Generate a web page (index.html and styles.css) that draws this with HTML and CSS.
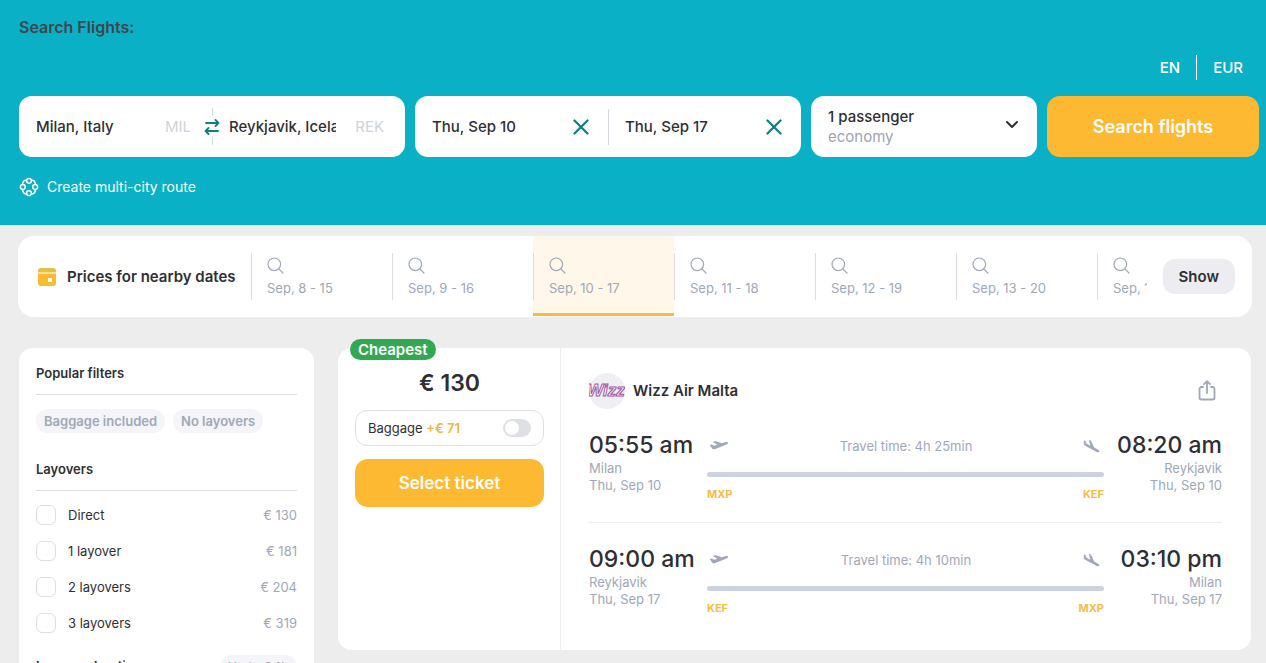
FILE: index.html
```html
<!DOCTYPE html>
<html lang="en">
<head>
    <meta charset="utf-8">
    <title>Search Flights</title>
    <meta name="viewport" content="width=device-width, initial-scale=1">
    <link rel="stylesheet" href="styles.css">
</head>
<body>
    <svg class="sprite" aria-hidden="true">
        <symbol id="close" viewBox="0 0 16 16"><path d="M1.500 1.500l13 13M14.500 1.500l-13 13" fill="none" stroke="currentColor" stroke-width="2.300" stroke-linecap="round"/></symbol>
        <symbol id="loupe" viewBox="0 0 17 17"><g fill="none" stroke="currentColor" stroke-width="1.200" stroke-linecap="round"><circle cx="7.300" cy="7.300" r="6.300"/><path d="M11.800 11.800l4.200 4.200"/></g></symbol>
        <symbol id="takeoff" viewBox="0 0 20 12"><path d="M.8 5l1.900-.6 2.500 1.300 3.100-.9L4 1.900l2.300-.8 6.500 2.200 4-1.200c1.200-.4 2.200-.2 2.400.5.2.7-.5 1.400-1.700 1.800L5.600 9.200c-1 .3-1.900.1-2.500-.7z" fill="currentColor"/></symbol>
        <symbol id="landing" viewBox="0 0 17 15"><path d="M.8 1.200l1.600.8.900 2.500 4 2.200L5.900.7l2.100 1 3.200 6.800 3.900 2.300c1 .6 1.400 1.400 1.100 2-.3.600-1.300.700-2.400.1L2.200 6.700C1.200 6.100.8 5.400.8 4.500z" fill="currentColor"/></symbol>
    </svg>

    <header class="header">
        <h1>Search Flights:</h1>
        <nav class="locale">
            <a href="#">EN</a>
            <a href="#">EUR</a>
        </nav>
        <form class="search">
            <div class="box">
                <div class="place">
                    <input type="text" value="Milan, Italy" aria-label="From">
                    <span class="code">MIL</span>
                </div>
                <button type="button" class="swap" aria-label="Swap cities">
                    <svg width="16" height="18" viewBox="0 0 16 18" fill="none" stroke="currentColor" stroke-width="1.800" stroke-linecap="round" stroke-linejoin="round"><path d="M2 5h12.500M11.500 2L14.500 5 11.500 8M14 13H1.500M4.500 10L1.500 13 4.500 16"/></svg>
                </button>
                <div class="place">
                    <input type="text" value="Reykjavik, Iceland" aria-label="To">
                    <span class="code">REK</span>
                </div>
            </div>
            <div class="box">
                <div class="date">
                    <input type="text" value="Thu, Sep 10" aria-label="Depart">
                    <button type="button" class="clear" aria-label="Clear departure date"><svg width="16" height="16"><use href="#close"/></svg></button>
                </div>
                <div class="date">
                    <input type="text" value="Thu, Sep 17" aria-label="Return">
                    <button type="button" class="clear" aria-label="Clear return date"><svg width="16" height="16"><use href="#close"/></svg></button>
                </div>
            </div>
            <button type="button" class="box passengers">
                <span>
                    <strong>1 passenger</strong>
                    <span class="cabin">economy</span>
                </span>
                <svg width="14" height="9" viewBox="0 0 14 9" fill="none" stroke="currentColor" stroke-width="2" stroke-linecap="round" stroke-linejoin="round"><path d="M2 2l5 5 5-5"/></svg>
            </button>
            <button type="submit" class="submit">Search flights</button>
        </form>
        <a href="#" class="multi">
            <svg width="20" height="20" viewBox="0 0 20 20" fill="none" stroke="currentColor" stroke-width="1.500" stroke-linecap="round">
                <circle cx="10" cy="3.800" r="2.400"/><circle cx="16.200" cy="10" r="2.400"/><circle cx="10" cy="16.200" r="2.400"/><circle cx="3.800" cy="10" r="2.400"/>
                <path d="M12.500 3c2 .1 3.700 1.500 4 4.400M16.500 12.600c-.3 2.900-2 4.300-4 4.400M7.500 17c-2-.1-3.700-1.500-4-4.400M3.500 7.400c.3-2.900 2-4.300 4-4.400"/>
            </svg>
            Create multi-city route
        </a>
    </header>

    <section class="nearby">
        <h2>
            <svg width="18" height="18" viewBox="0 0 18 18"><path d="M0 4.500V3a3 3 0 0 1 3-3h12a3 3 0 0 1 3 3v1.500z" fill="#e8bf3f"/><path d="M0 5.500h18V15a3 3 0 0 1-3 3H3a3 3 0 0 1-3-3z" fill="#fbbb30"/><rect x="10" y="10" width="4" height="4" rx=".5" fill="#fff"/></svg>
            Prices for nearby dates
        </h2>
        <div class="dates">
            <a href="#" class="day"><span><svg width="17" height="17"><use href="#loupe"/></svg>Sep, 8 - 15</span></a>
            <a href="#" class="day"><span><svg width="17" height="17"><use href="#loupe"/></svg>Sep, 9 - 16</span></a>
            <a href="#" class="day active"><span><svg width="17" height="17"><use href="#loupe"/></svg>Sep, 10 - 17</span></a>
            <a href="#" class="day"><span><svg width="17" height="17"><use href="#loupe"/></svg>Sep, 11 - 18</span></a>
            <a href="#" class="day"><span><svg width="17" height="17"><use href="#loupe"/></svg>Sep, 12 - 19</span></a>
            <a href="#" class="day"><span><svg width="17" height="17"><use href="#loupe"/></svg>Sep, 13 - 20</span></a>
            <a href="#" class="day"><span><svg width="17" height="17"><use href="#loupe"/></svg>Sep, 14 - 21</span></a>
        </div>
        <button type="button" class="show">Show</button>
    </section>

    <main class="content">
        <aside class="filters">
            <h3>Popular filters</h3>
            <div class="chips">
                <button type="button" class="chip">Baggage included</button>
                <button type="button" class="chip">No layovers</button>
            </div>
            <h3>Layovers</h3>
            <div class="options">
                <label><input type="checkbox">Direct <span>€ 130</span></label>
                <label><input type="checkbox">1 layover <span>€ 181</span></label>
                <label><input type="checkbox">2 layovers <span>€ 204</span></label>
                <label><input type="checkbox">3 layovers <span>€ 319</span></label>
            </div>
            <h3 class="duration">Layover duration <span class="chip">Up to 34h</span></h3>
        </aside>

        <article class="ticket">
            <div class="offer">
                <span class="badge">Cheapest</span>
                <div class="price">€ 130</div>
                <label class="baggage">
                    <span>Baggage <b>+€ 71</b></span>
                    <input type="checkbox" role="switch">
                </label>
                <button type="button" class="select">Select ticket</button>
            </div>
            <div class="flights">
                <div class="airline">
                    <svg class="logo" width="36" height="36" viewBox="0 0 36 36">
                        <circle cx="18" cy="18" r="18" fill="#efeff4"/>
                        <text x="17" y="23" text-anchor="middle">Wizz</text>
                    </svg>
                    <h3>Wizz Air Malta</h3>
                    <button type="button" class="share" aria-label="Share">
                        <svg width="18" height="22" viewBox="0 0 18 22" fill="none" stroke="currentColor" stroke-width="1.800" stroke-linecap="round" stroke-linejoin="round"><path d="M5 7H3.500A2 2 0 0 0 1.500 9v8.500a2 2 0 0 0 2 2h11a2 2 0 0 0 2-2V9a2 2 0 0 0-2-2H13M9 13V1.500M6 4.200L9 1.200l3 3"/></svg>
                    </button>
                </div>
                <div class="leg">
                    <div class="point">
                        <div class="time">05:55 am</div>
                        <div>Milan</div>
                        <div>Thu, Sep 10</div>
                    </div>
                    <div class="path">
                        <div class="travel">
                            <svg width="20" height="12"><use href="#takeoff"/></svg>
                            <span>Travel time: 4h 25min</span>
                            <svg width="17" height="15"><use href="#landing"/></svg>
                        </div>
                        <div class="line"></div>
                        <div class="airports"><span>MXP</span><span>KEF</span></div>
                    </div>
                    <div class="point arrival">
                        <div class="time">08:20 am</div>
                        <div>Reykjavik</div>
                        <div>Thu, Sep 10</div>
                    </div>
                </div>
                <div class="leg">
                    <div class="point">
                        <div class="time">09:00 am</div>
                        <div>Reykjavik</div>
                        <div>Thu, Sep 17</div>
                    </div>
                    <div class="path">
                        <div class="travel">
                            <svg width="20" height="12"><use href="#takeoff"/></svg>
                            <span>Travel time: 4h 10min</span>
                            <svg width="17" height="15"><use href="#landing"/></svg>
                        </div>
                        <div class="line"></div>
                        <div class="airports"><span>KEF</span><span>MXP</span></div>
                    </div>
                    <div class="point arrival">
                        <div class="time">03:10 pm</div>
                        <div>Milan</div>
                        <div>Thu, Sep 17</div>
                    </div>
                </div>
            </div>
        </article>
    </main>
</body>
</html>
```
FILE: styles.css
```css
* { box-sizing: border-box; }
body { margin: 0; background: #ededed; color: #2f2f33; font: 13px/18px Inter, "Liberation Sans", sans-serif; }
h1, h2, h3 { margin: 0; font-weight: 600; }
a { color: inherit; text-decoration: none; }
button { border: 0; padding: 0; background: none; color: inherit; font: inherit; cursor: pointer; }
input { margin: 0; }
svg { display: block; flex: none; }
.sprite { position: absolute; width: 0; height: 0; }

/* header */
.header { background: #0ab0c5; padding: 16px 7px 28px 19px; }
.header h1 { font-size: 16px; line-height: 22px; color: #3d474c; }
.locale { display: flex; justify-content: flex-end; margin: 17px 0 16px; color: #fff; font-size: 15px; line-height: 25px; font-weight: 500; }
.locale a { padding: 0 16px; }
.locale a + a { border-left: 1px solid #fff; }
.search { display: grid; grid-template-columns: 386fr 386fr 226fr 212fr; gap: 10px; }
.box { position: relative; display: flex; min-width: 0; height: 61px; background: #fff; border-radius: 13px; }
.search input { flex: 1; min-width: 0; width: 0; border: 0; padding: 0; background: none; color: #2f2f33; font: 500 15px/20px Inter, "Liberation Sans", sans-serif; }
.place, .date { flex: 1; min-width: 0; display: flex; align-items: center; gap: 19px; padding: 0 21px 0 17px; }
.date { padding-right: 19px; }
.code { color: #cfd3da; font-size: 15px; line-height: 20px; }
.swap { position: absolute; top: 12px; bottom: 12px; left: 50%; width: 16px; margin-left: -8px; display: flex; flex-direction: column; align-items: center; justify-content: space-between; color: #0f8088; }
.swap::before, .swap::after { content: ""; width: 1px; height: 8px; background: #d5d8dc; }
.date + .date { background: linear-gradient(#d5d8dc, #d5d8dc) left / 1px 36px no-repeat; }
.clear { color: #0f8088; }
.passengers { align-items: center; justify-content: space-between; padding: 0 18px 0 17px; text-align: left; font-size: 15px; line-height: 20px; }
.passengers strong { display: block; font-weight: 500; }
.passengers svg { margin-bottom: 4px; }
.cabin { color: #9ea4b0; }
.submit, .select { background: #fdb931; color: #fff; border-radius: 13px; font-size: 18px; font-weight: 600; }
.multi { display: inline-flex; align-items: center; gap: 8px; margin-top: 20px; color: #fff; font-size: 14px; line-height: 20px; vertical-align: top; }

/* nearby dates */
.nearby { display: flex; align-items: center; height: 81px; margin: 11px 14px 31px 18px; padding-right: 17px; background: #fff; border-radius: 16px; }
.nearby h2 { flex: none; display: flex; align-items: center; gap: 11px; width: 233px; padding-left: 20px; font-size: 15px; line-height: 20px; white-space: nowrap; }
.dates { flex: 1; min-width: 0; display: flex; overflow: hidden; height: 81px; margin-right: 16px; }
.day { flex: none; width: 141px; height: 80px; padding: 17px 0 13px; color: #a0a8b8; border-bottom: 3px solid transparent; }
.day span { display: block; height: 47px; padding: 4px 0 0 15px; border-left: 1px solid #dcdee3; white-space: nowrap; line-height: 20px; }
.day svg { margin-bottom: 4px; }
.day.active { background: #fff7ea; border-bottom-color: #f3bd45; }
.show { flex: none; height: 35px; padding: 0 16px; background: #ededf1; border-radius: 12px; font-size: 15px; font-weight: 600; }

/* filters */
.content { display: flex; align-items: flex-start; gap: 24px; margin: 0 15px 0 19px; }
.filters { flex: none; width: 295px; padding: 16px 17px; background: #fff; border-radius: 14px; }
.filters h3 { padding-bottom: 12px; border-bottom: 1px solid #dfe0e4; font-size: 13px; line-height: 18px; }
.chips { display: flex; gap: 8px; margin: 14px 0 27px; }
.chip { padding: 0 8px; border-radius: 12px; background: #f5f5f9; color: #a0a8b8; font-size: 13px; line-height: 24px; font-weight: 600; }
.options { padding-top: 6px; }
.options label { display: flex; align-items: center; height: 36px; }
.options input { appearance: none; width: 20px; height: 20px; margin-right: 12px; background: #fff; border: 1px solid #dcdee3; border-radius: 6px; }
.options span { margin-left: auto; color: #a0a8b8; }
.filters .duration { display: flex; align-items: flex-start; justify-content: space-between; margin-top: 14px; line-height: 22px; }

/* ticket */
.ticket { flex: 1; min-width: 0; display: flex; min-height: 302px; background: #fff; border-radius: 14px; }
.offer { position: relative; flex: none; width: 223px; padding: 21px 16px 16px 17px; border-right: 1px solid #ededf0; }
.badge { position: absolute; top: -9px; left: 12px; padding: 0 8px; border-radius: 11px; background: #33a852; color: #fff; font-size: 15px; line-height: 21px; font-weight: 600; }
.price { font-size: 23px; line-height: 28px; font-weight: 600; text-align: center; }
.baggage { display: flex; align-items: center; justify-content: space-between; height: 36px; margin: 13px 0; padding: 0 12px; border: 1px solid #dfe0e4; border-radius: 12px; }
.baggage b { color: #f0b440; font-weight: 600; }
.baggage input { appearance: none; width: 28px; height: 18px; padding: 2px; border-radius: 9px; background: #dfe0e4; }
.baggage input::before { content: ""; display: block; width: 14px; height: 14px; border-radius: 50%; background: #fff; }
.select { width: 100%; height: 48px; font-size: 17px; }
.flights { flex: 1; min-width: 0; padding: 25px 29px 24px 28px; }
.airline { display: flex; align-items: center; gap: 8px; height: 36px; margin-bottom: 21px; }
.airline h3 { font-size: 15px; line-height: 20px; }
.logo text { fill: #fff; stroke: #a2559c; stroke-width: 1; font: italic 700 17px "Liberation Sans Narrow", "Liberation Sans", sans-serif; }
.share { margin-left: auto; padding: 0 6px; color: #a0a8b8; }
.leg { display: flex; color: #a0a8b8; line-height: 17px; }
.leg + .leg { margin-top: 19px; padding-top: 21px; border-top: 1px solid #ededf0; }
.point { flex: none; width: 118px; white-space: nowrap; }
.arrival { text-align: right; }
.time { color: #2f2f33; font-size: 23px; line-height: 30px; font-weight: 500; }
.path { flex: 1; min-width: 0; }
.travel { display: flex; align-items: center; justify-content: space-between; height: 32px; padding: 0 4px 0 2px; }
.line { height: 5px; margin: 10px 0 9px; border-radius: 3px; background: #cdd3de; }
.airports { display: flex; justify-content: space-between; color: #f3bd45; font-size: 11px; font-weight: 700; }
```
